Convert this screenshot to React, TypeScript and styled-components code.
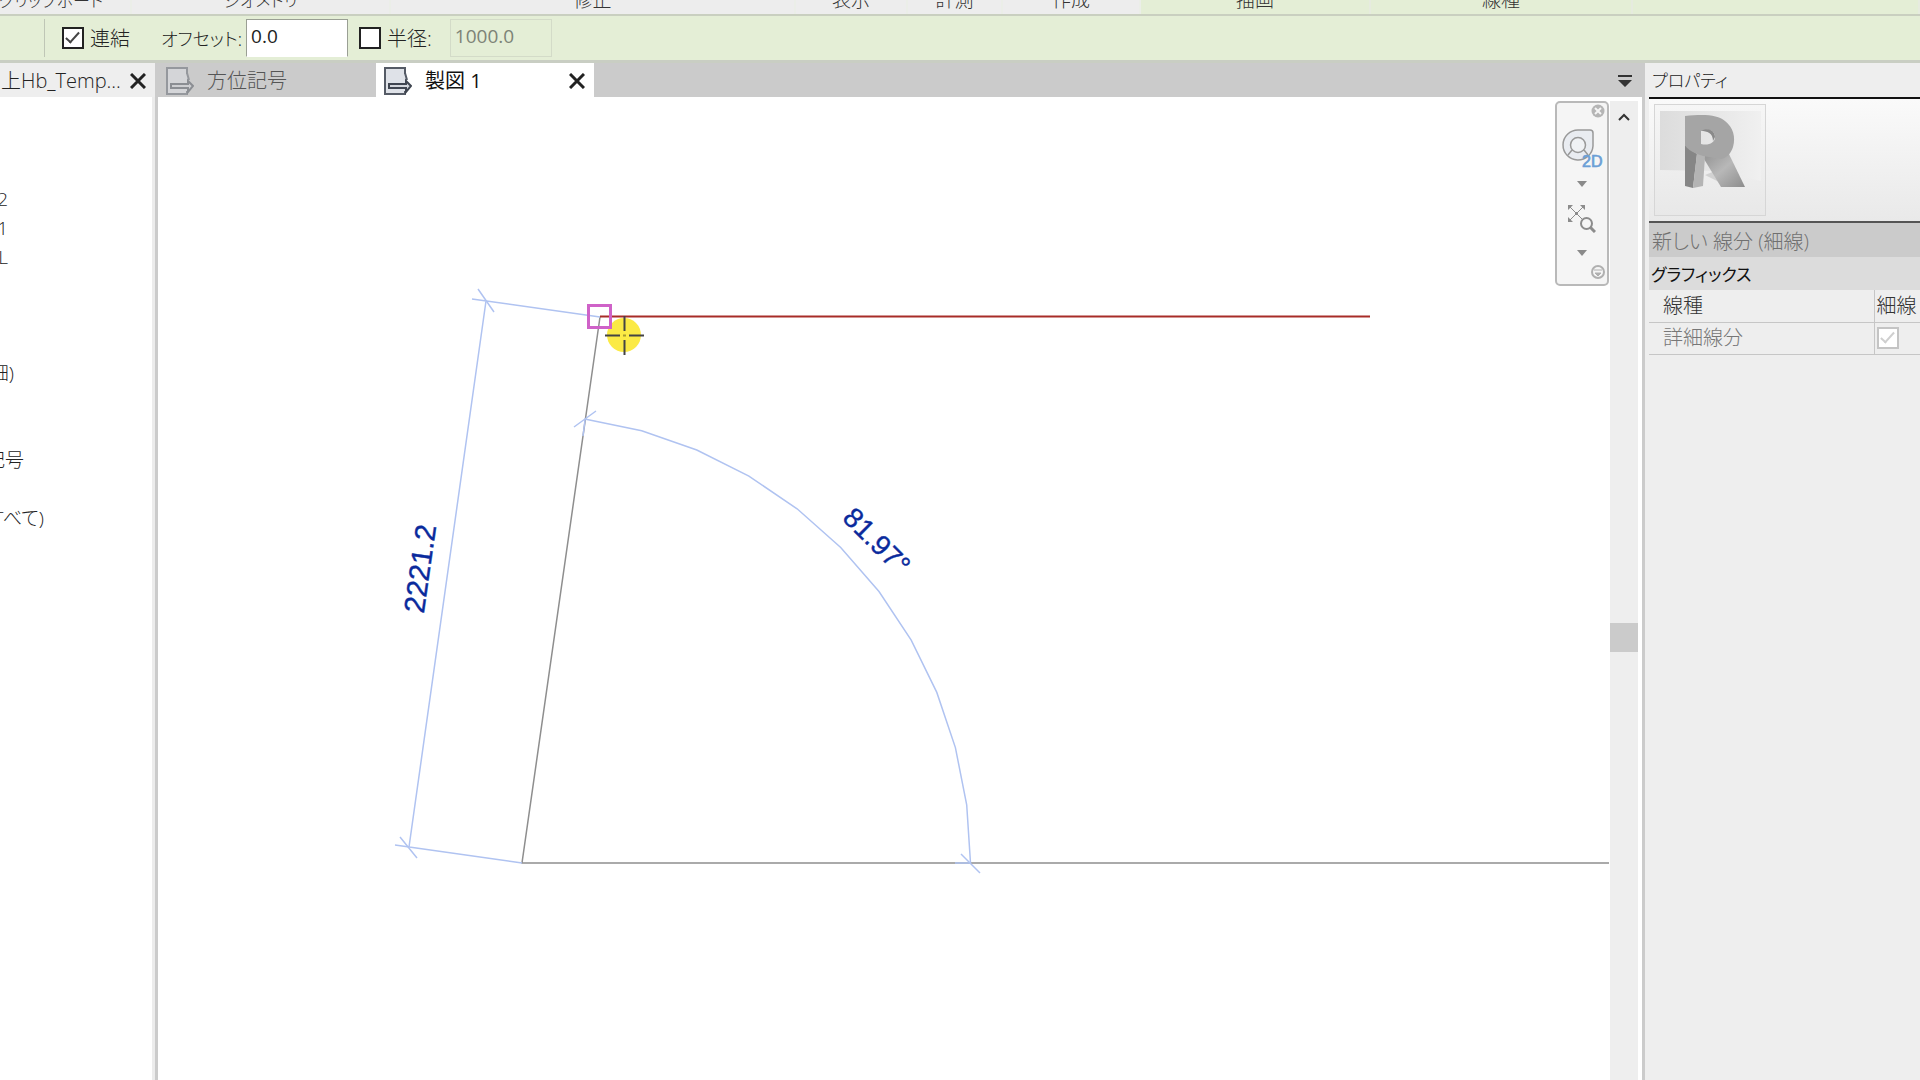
import React from "react";
import styled, { createGlobalStyle, css } from "styled-components";

const sans = `"Open Sans", "Noto Sans CJK JP", sans-serif`;

const GlobalStyle = createGlobalStyle`
  *, *::before, *::after { box-sizing: border-box; }
  body { margin: 0; background: #fff; overflow: hidden; }
  button, input { font: inherit; color: inherit; margin: 0; }
  h1, h2, p { margin: 0; font-size: inherit; font-weight: inherit; }
`;

const Page = styled.div`
  display: flex;
  flex-direction: column;
  height: 100vh;
  font-family: ${sans};
  font-size: 20px;
  font-weight: 300;
  line-height: 28px;
  font-feature-settings: "palt";
  color: #222;
  white-space: nowrap;
  overflow: hidden;
`;

const Ribbon = styled.div`
  display: flex;
  height: 16px;
  flex: none;
  background: #ededed;
  border-bottom: 2px solid #c9cfc0;
`;

const RibbonPanel = styled.div<{ $width?: number; $active?: boolean; $kana?: boolean; $cut?: boolean }>`
  display: flex;
  align-items: flex-end;
  justify-content: center;
  flex: ${(p) => (p.$width ? `0 0 ${p.$width}px` : "1 1 0")};
  overflow: hidden;
  font-size: ${(p) => (p.$kana ? 17 : 19)}px;
  line-height: 20px;
  padding-bottom: ${(p) => (p.$kana ? 3 : 4)}px;
  padding-right: ${(p) => (p.$cut ? 28 : 0)}px;
  color: #333;
  background: ${(p) => (p.$active ? "#e4eed6" : "#ededed")};
  border-right: 2px solid ${(p) => (p.$active ? "#e6ebdf" : "#ebeee8")};
`;

const OptionsBar = styled.form`
  display: flex;
  align-items: center;
  height: 47px;
  flex: none;
  padding-left: 44px;
  background: #e4eed6;
  border-bottom: 3px solid #c9cec3;
`;

const Option = styled.div<{ $gap: number; $space?: number }>`
  display: flex;
  align-items: center;
  gap: ${(p) => p.$space ?? 6}px;
  margin-left: ${(p) => p.$gap}px;
`;

const OptionLabel = styled.label<{ $kana?: boolean }>`
  padding-top: 2px;
  font-size: ${(p) => (p.$kana ? 18 : 20)}px;
`;

const Divider = styled.span`
  width: 1px;
  height: 38px;
  background: #bfc6b6;
`;

const CheckBox = styled.input`
  appearance: none;
  position: relative;
  flex: none;
  width: 22px;
  height: 22px;
  background: #fff;
  border: 2px solid #222;
  &:checked::after {
    content: "";
    position: absolute;
    left: 5px;
    top: 0;
    width: 7px;
    height: 14px;
    border: solid #444;
    border-width: 0 2px 2px 0;
    transform: rotate(42deg);
  }
  &:disabled {
    border: 2px solid #c4c4c4;
  }
  &:disabled::after {
    border-color: #cfcfcf;
  }
`;

const ValueBox = styled.input`
  width: 102px;
  height: 38px;
  padding: 0 4px 4px;
  border: 1px solid #9a9f94;
  border-bottom-color: #fff;
  background: #fff;
  color: #222;
  font-size: 19px;
  font-weight: 400;
  &:disabled {
    color: #7d8376;
    background: transparent;
    border-color: #d3dbc8;
  }
`;

const Workspace = styled.div`
  display: flex;
  flex: 1;
  min-height: 0;
`;

const Browser = styled.aside`
  width: 158px;
  flex: none;
  display: flex;
  flex-direction: column;
  border-right: 3px solid #cbcbcb;
`;

const BrowserHead = styled.header`
  display: flex;
  align-items: center;
  justify-content: space-between;
  height: 34px;
  padding: 2px 9px 0 1px;
  background: #eee;
`;

const Tree = styled.ul`
  flex: 1;
  margin: 0;
  padding: 88px 0 0;
  list-style: none;
  border-right: 3px solid #ececec;
  overflow: hidden;
`;

const TreeRow = styled.li<{ $end: number }>`
  display: flex;
  justify-content: flex-end;
  width: ${(p) => p.$end}px;
  height: 29px;
  line-height: 28px;
  font-size: 19px;
`;

const IconButton = styled.button`
  display: inline-flex;
  align-items: center;
  justify-content: center;
  flex: none;
  padding: 0;
  border: 0;
  background: none;
  svg { display: block; }
`;

const Center = styled.main`
  flex: 1;
  min-width: 0;
  display: flex;
  flex-direction: column;
`;

const TabBar = styled.div`
  display: flex;
  height: 34px;
  flex: none;
  background: #cbcbcb;
`;

const Tab = styled.div<{ $active?: boolean }>`
  display: flex;
  align-items: center;
  justify-content: space-between;
  width: 218px;
  padding: 1px 9px 0 8px;
  color: #555;
  ${(p) => p.$active && css`
    background: #fff;
    color: #111;
    font-weight: 400;
  `}
`;

const TabLabel = styled.button`
  display: flex;
  align-items: center;
  gap: 13px;
  padding: 0;
  border: 0;
  background: none;
`;

const TabMenu = styled(IconButton)`
  margin-left: auto;
  padding: 1px 10px 0 0;
`;

const ViewArea = styled.div`
  flex: 1;
  min-height: 0;
  display: flex;
`;

const Canvas = styled.div`
  position: relative;
  flex: 1;
  min-width: 0;
  background: #fff;
`;

const Drawing = styled.svg`
  display: block;
  width: 100%;
  height: 100%;
`;

const Dimension = styled.text<{ $size: number }>`
  font-family: "Liberation Sans", sans-serif;
  font-size: ${(p) => p.$size}px;
  font-weight: 400;
  fill: #0a2a9c;
  stroke: #0a2a9c;
  stroke-width: 0.4px;
  text-anchor: middle;
`;

const NavBar = styled.nav`
  position: absolute;
  top: 4px;
  right: 1px;
  width: 54px;
  height: 185px;
  display: flex;
  flex-direction: column;
  align-items: center;
  border: 2px solid #b9b9b9;
  border-radius: 5px;
  background: #f5f5f5;
`;

const NavButton = styled(IconButton)<{ $h: number; $end?: boolean }>`
  height: ${(p) => p.$h}px;
  align-self: ${(p) => (p.$end ? "flex-end" : "center")};
  padding-right: ${(p) => (p.$end ? 2 : 0)}px;
`;

const NavRule = styled.span`
  width: 46px;
  height: 1px;
  background: #cfcfcf;
`;

const ScrollTrack = styled.div`
  width: 32px;
  flex: none;
  margin-top: 4px;
  display: flex;
  flex-direction: column;
  background: #eee;
  border-right: 4px solid #fff;
`;

const ScrollUp = styled(IconButton)`
  height: 32px;
`;

const ScrollThumb = styled.span`
  height: 29px;
  margin-top: 490px;
  background: #cbcbcb;
`;

const Properties = styled.aside`
  width: 278px;
  flex: none;
  display: flex;
  flex-direction: column;
  background: #eee;
  border-left: 3px solid #cbcbcb;
  padding-left: 4px;
  overflow: hidden;
`;

const PanelTitle = styled.h2`
  height: 36px;
  line-height: 36px;
  padding-left: 3px;
  font-size: 17px;
  border-bottom: 2px solid #111;
`;

const Preview = styled.div`
  height: 124px;
  padding: 5px;
  background: linear-gradient(#fafafa, #e9e9e9);
  border-bottom: 2px solid #555;
`;

const Thumb = styled.div`
  width: 112px;
  height: 112px;
  border: 1px solid #d6d6d6;
  background: linear-gradient(#f6f6f6, #e8e8e8);
  svg { display: block; }
`;

const Selection = styled.p`
  height: 34px;
  line-height: 38px;
  padding-left: 3px;
  background: #cbcbcb;
  color: #707070;
`;

const Table = styled.table`
  width: 100%;
  border-collapse: collapse;
  table-layout: fixed;
`;

const GroupHead = styled.th`
  height: 33px;
  padding: 2px 0 0 2px;
  background: #dcdcdc;
  color: #111;
  font-size: 17px;
  text-align: left;
  font-weight: 400;
`;

const Name = styled.th<{ $dim?: boolean }>`
  height: 32px;
  padding: 0 0 0 14px;
  text-align: left;
  font-weight: 300;
  color: ${(p) => (p.$dim ? "#777" : "#333")};
  border-bottom: 1px solid #c6c6c6;
  border-right: 1px solid #c6c6c6;
`;

const Value = styled.td`
  padding: 0 0 0 2px;
  color: #333;
  border-bottom: 1px solid #c6c6c6;
  overflow: hidden;
  input { display: block; }
`;

const NameColumn = styled.col`
  width: 225px;
`;

const CrossIcon = () => (
  <svg width="16" height="16" viewBox="0 0 16 16" stroke="#222" strokeWidth="3">
    <path d="M1 1L15 15M15 1L1 15" />
  </svg>
);

const SheetIcon = ({ dim }: { dim?: boolean }) => (
  <svg width="28" height="28" viewBox="0 0 28 28" opacity={dim ? 0.45 : 1}>
    <path d="M1 1H21V7L23 13V17H6V22H21V27H1Z" fill="#dfe2e8" />
    <path d="M21 7V1H1V27H21V24M21 6L23 13" fill="none" stroke="#555b66" strokeWidth="2" />
    <path d="M5 17H22V14L27 19L22 25V21H5Z" fill="#d3d6dc" stroke="#3f4550" strokeWidth="2" />
  </svg>
);

const Caret = () => (
  <svg width="10" height="6" viewBox="0 0 10 6"><path d="M0 0H10L5 6Z" fill="#8a8a8a" /></svg>
);

const origin = { x: 522, y: 863 };
const arcPoints = Array.from({ length: 12 }, (_, i) => {
  const a = (i * 81.97 * Math.PI) / (11 * 180);
  return `${(origin.x + 448.5 * Math.cos(a)).toFixed(1)},${(origin.y - 448.5 * Math.sin(a)).toFixed(1)}`;
}).join(" ");

const ribbonPanels = [
  { label: "クリップボード", width: 132, kana: true, cut: true },
  { label: "ジオメトリ", width: 259, kana: true },
  { label: "修正", width: 405 },
  { label: "表示", width: 112 },
  { label: "計測", width: 95 },
  { label: "作成", width: 138 },
  { label: "描画", width: 230, active: true },
  { label: "線種", width: 262, active: true },
];

const treeRows = [
  { text: "2", end: 8 }, { text: "1", end: 8 }, { text: "L", end: 8 },
  { text: "", end: 8 }, { text: "", end: 8 }, { text: "", end: 8 },
  { text: "詳細)", end: 14 }, { text: "", end: 8 }, { text: "", end: 8 },
  { text: "記号", end: 24 }, { text: "", end: 8 }, { text: "すべて)", end: 44 },
];

export default function App() {
  return (
    <Page>
      <GlobalStyle />
      <Ribbon>
        {ribbonPanels.map((p) => (
          <RibbonPanel key={p.label} $width={p.width} $active={p.active} $kana={p.kana} $cut={p.cut}>{p.label}</RibbonPanel>
        ))}
        <RibbonPanel $active />
      </Ribbon>
      <OptionsBar>
        <Divider />
        <Option $gap={17}>
          <CheckBox type="checkbox" id="chain" defaultChecked />
          <OptionLabel htmlFor="chain">連結</OptionLabel>
        </Option>
        <Option $gap={31} $space={4}>
          <OptionLabel $kana htmlFor="offset">オフセット:</OptionLabel>
          <ValueBox id="offset" defaultValue="0.0" />
        </Option>
        <Option $gap={11}>
          <CheckBox type="checkbox" id="radius" />
          <OptionLabel htmlFor="radius">半径:</OptionLabel>
        </Option>
        <Option $gap={18}>
          <ValueBox aria-label="半径" defaultValue="1000.0" disabled />
        </Option>
      </OptionsBar>
      <Workspace>
        <Browser>
          <BrowserHead>
            <span>上Hb_Temp...</span>
            <IconButton aria-label="閉じる"><CrossIcon /></IconButton>
          </BrowserHead>
          <Tree>
            {treeRows.map((r, i) => <TreeRow key={i} $end={r.end}>{r.text}</TreeRow>)}
          </Tree>
        </Browser>
        <Center>
          <TabBar>
            <Tab><TabLabel><SheetIcon dim />方位記号</TabLabel></Tab>
            <Tab $active>
              <TabLabel><SheetIcon />製図 1</TabLabel>
              <IconButton aria-label="閉じる"><CrossIcon /></IconButton>
            </Tab>
            <TabMenu aria-label="タブ一覧">
              <svg width="14" height="12" viewBox="0 0 14 12" fill="#333"><path d="M0 0H14V2H0ZM0 5H14L7 12Z" /></svg>
            </TabMenu>
          </TabBar>
          <ViewArea>
            <Canvas>
              <Drawing>
                <g transform="translate(-158 -97)" fill="none">
                  <path d={`M600 317L${origin.x} ${origin.y}H1609`} stroke="#8e8e8e" strokeWidth="1.5" />
                  <g stroke="#b0c3f1" strokeWidth="1.5">
                    <path d="M472 299L600 317M486 301L409 847M395 845L522 863" />
                    <path d="M478 289L494 312M400 837L417 858M574 427L596 411M961 854L980 873" />
                    <path d="M585 420L583 436M955 863H971" />
                    <polyline points={arcPoints} />
                  </g>
                  <circle cx="624" cy="335" r="17" fill="#fbea45" />
                  <path d="M600 316.500H1370" stroke="#a82c28" strokeWidth="1.800" />
                  <path d="M605 335.500H620M629 335.500H644M624.500 316V331M624.500 340V355" stroke="#444" strokeWidth="2" />
                  <path d="M623 335.500H626" stroke="#a89c30" strokeWidth="2" />
                  <rect x="588.500" y="305.500" width="22" height="22" stroke="#cf62c8" strokeWidth="3" />
                  <Dimension $size={29} transform="translate(430 570) rotate(-82)">2221.2</Dimension>
                  <Dimension $size={28} transform="translate(870 548) rotate(45)">81.97°</Dimension>
                </g>
              </Drawing>
              <NavBar aria-label="ナビゲーション">
                <NavButton $h={16} $end aria-label="閉じる">
                  <svg width="14" height="14" viewBox="0 0 14 14"><circle cx="7" cy="7" r="6.500" fill="#b5b5b5" /><path d="M4 4L10 10M10 4L4 10" stroke="#f5f5f5" strokeWidth="2" /></svg>
                </NavButton>
                <NavButton $h={58} aria-label="2D">
                  <svg width="42" height="40" viewBox="0 0 42 40">
                    <path d="M17 2H29Q32 2 32 5V18A15 15 0 1 1 17 2Z" fill="#e9ecf1" stroke="#999" strokeWidth="1.500" />
                    <circle cx="17" cy="17" r="7.500" fill="#f0f2f5" stroke="#999" strokeWidth="1.500" />
                    <path d="M11 22L7 27M23 22L27 27" stroke="#999" strokeWidth="1.500" />
                    <text x="21" y="39" fontFamily="Liberation Sans" fontSize="16" fontWeight="400" fill="#6c9fd6" stroke="#6c9fd6" strokeWidth="0.700">2D</text>
                  </svg>
                </NavButton>
                <NavButton $h={14} aria-label="ホイール"><Caret /></NavButton>
                <NavRule />
                <NavButton $h={56} aria-label="ズーム">
                  <svg width="28" height="28" viewBox="0 0 28 28" stroke="#8c8c8c" fill="none">
                    <path d="M2 2L15 15M15 2L2 15" strokeWidth="1" />
                    <path d="M7 7H10V10H7ZM0 0H5L0 5ZM17 0H12L17 5ZM0 17H5L0 12Z" fill="#8c8c8c" stroke="none" />
                    <circle cx="18.500" cy="18.500" r="5.500" strokeWidth="2" fill="#f5f5f5" />
                    <path d="M22.500 22.500L27 27" strokeWidth="3" />
                  </svg>
                </NavButton>
                <NavButton $h={12} aria-label="ズームのオプション"><Caret /></NavButton>
                <NavButton $h={26} $end aria-label="最小化">
                  <svg width="14" height="14" viewBox="0 0 14 14"><circle cx="7" cy="7" r="6" fill="none" stroke="#b0b0b0" strokeWidth="2" /><path d="M3 5H11M4 8H10L7 11Z" stroke="#b0b0b0" fill="#b0b0b0" /></svg>
                </NavButton>
              </NavBar>
            </Canvas>
            <ScrollTrack>
              <ScrollUp aria-label="上へ">
                <svg width="12" height="8" viewBox="0 0 12 8" fill="none" stroke="#333" strokeWidth="2"><path d="M1 7L6 2L11 7" /></svg>
              </ScrollUp>
              <ScrollThumb />
            </ScrollTrack>
          </ViewArea>
        </Center>
        <Properties>
          <PanelTitle>プロパティ</PanelTitle>
          <Preview>
            <Thumb>
              <svg width="110" height="110" viewBox="0 0 110 110">
                <defs>
                  <linearGradient id="wall" x1="0" y1="0" x2="1" y2="0">
                    <stop offset="0" stopColor="#dcdcdc" />
                    <stop offset="1" stopColor="#f0f0f0" />
                  </linearGradient>
                  <linearGradient id="leg" x1="0" y1="0" x2="1" y2="1">
                    <stop offset="0" stopColor="#8e8e8e" />
                    <stop offset="0.500" stopColor="#b8b8b8" />
                    <stop offset="1" stopColor="#8c8c8c" />
                  </linearGradient>
                </defs>
                <path d="M5 6H106V76L60 66L5 65Z" fill="url(#wall)" />
                <path d="M60 66L50 70L66 78Z" fill="#d2d2d2" />
                <path d="M48 51L72 45L90 82H66L49 54Z" fill="url(#leg)" />
                <path d="M30 40L42 49L38 83L30 81Z" fill="#868686" />
                <path d="M42 48L50 51L48 81L38 83Z" fill="#b4b4b4" />
                <path fillRule="evenodd" d="M30 11C50 9 63 10 70 16C78 22 81 32 78 42C76 48 72 53 66 54L48 51L42 49C36 46 32 44 30 40ZM46 26V39C53 41 60 38 60 32C60 26 54 23 46 26Z" fill="#a5a5a5" />
                <path d="M46 26C52 22 60 25 60 32L58 36C58 28 52 26 46 26Z" fill="#8a8a8a" />
              </svg>
            </Thumb>
          </Preview>
          <Selection>新しい 線分 (細線)</Selection>
          <Table>
            <colgroup><NameColumn /><col /></colgroup>
            <tbody>
              <tr><GroupHead colSpan={2}>グラフィックス</GroupHead></tr>
              <tr><Name scope="row">線種</Name><Value>細線</Value></tr>
              <tr>
                <Name scope="row" $dim><label htmlFor="detail">詳細線分</label></Name>
                <Value><CheckBox id="detail" type="checkbox" defaultChecked disabled /></Value>
              </tr>
            </tbody>
          </Table>
        </Properties>
      </Workspace>
    </Page>
  );
}
